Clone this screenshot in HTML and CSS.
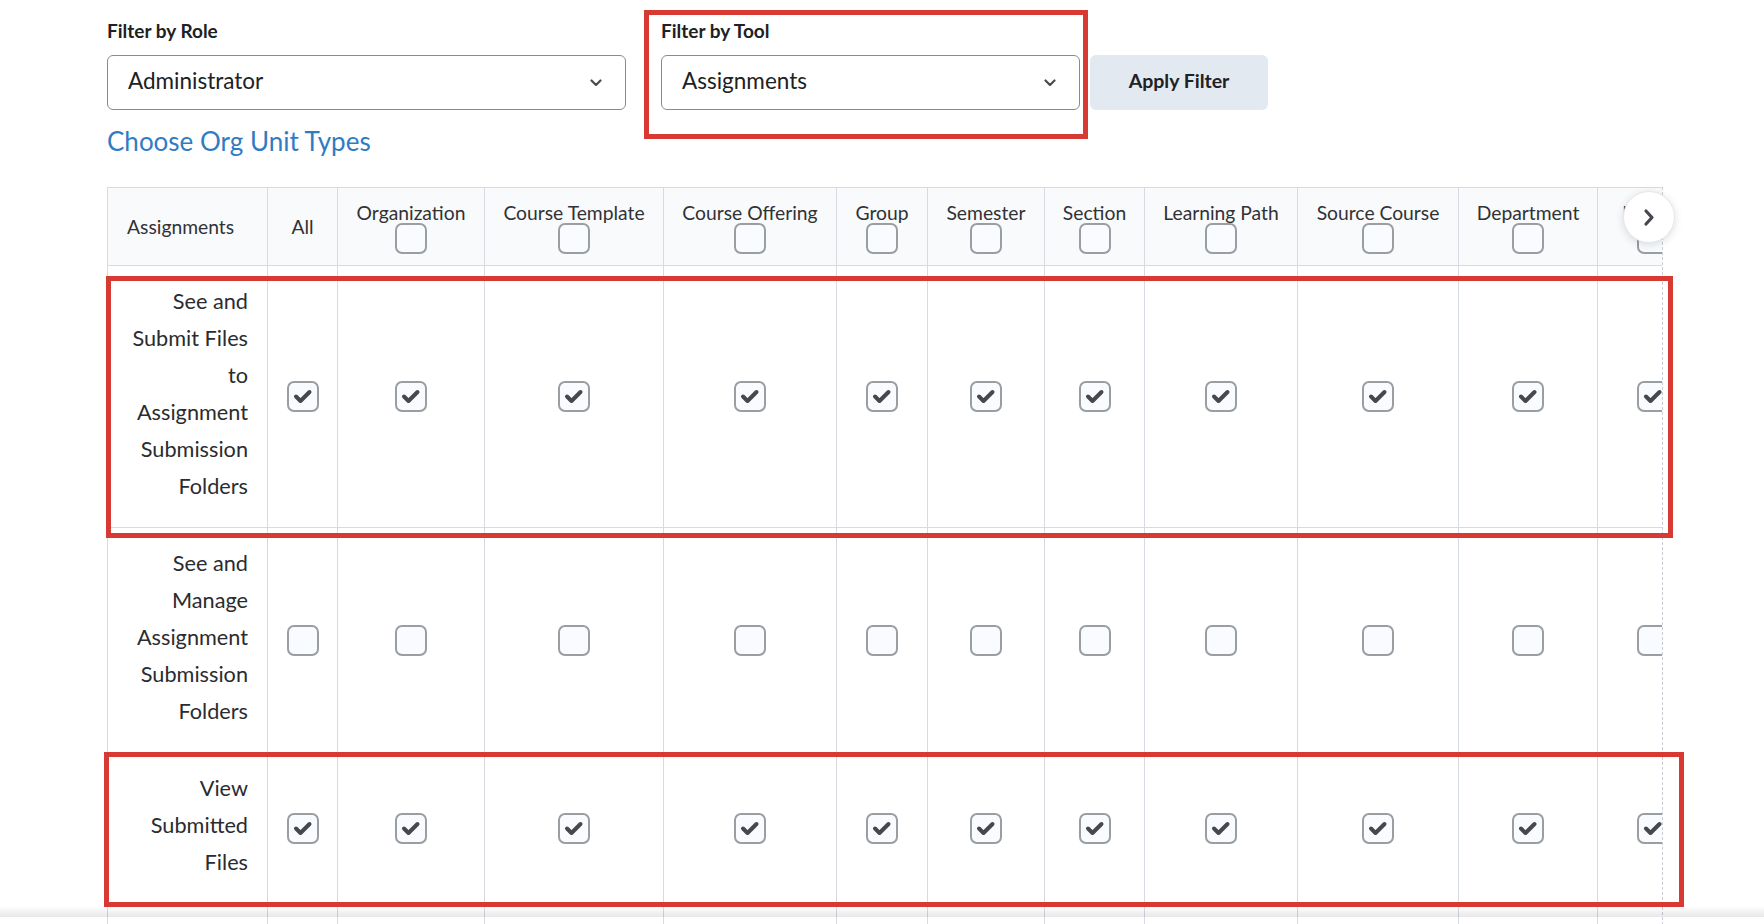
FILE: index.html
```html
<!DOCTYPE html>
<html>
<head>
	<title>Permissions</title>
	<meta charset="utf-8">
	<link rel="stylesheet" href="styles.css">
</head>
<body>
	<!-- check mark used by every ticked box -->
	<svg class="defs" width="0" height="0">
		<symbol id="ck" viewBox="0 0 28 27"><path d="M7 13.5l4.5 4.5 9-9" fill="none" stroke="currentColor" stroke-width="4" stroke-linecap="round" stroke-linejoin="round"/></symbol>
		<symbol id="down" viewBox="0 0 12 8"><path d="M1.5 1.5L6 6l4.5-4.5" fill="none" stroke="currentColor" stroke-width="2.2" stroke-linecap="round" stroke-linejoin="round"/></symbol>
	</svg>

	<div class="page">
		<!--filters start-->
		<div class="filters">
			<div class="field role">
				<label>Filter by Role</label>
				<div class="select"><span>Administrator</span><svg class="chev"><use href="#down"/></svg></div>
			</div>
			<div class="field tool">
				<label>Filter by Tool</label>
				<div class="select"><span>Assignments</span><svg class="chev"><use href="#down"/></svg></div>
			</div>
			<button class="btn">Apply Filter</button>
		</div>
		<a class="org-link" href="#">Choose Org Unit Types</a>
		<!--end filters-->

		<!--permission grid start-->
		<div class="grid-area">
			<div class="grid-scroll">
				<table class="perm">
					<colgroup>
						<col class="c-name"><col class="c-all"><col class="c-org"><col class="c-tpl"><col class="c-off"><col class="c-grp">
						<col class="c-sem"><col class="c-sec"><col class="c-lp"><col class="c-src"><col class="c-dep"><col class="c-fac">
					</colgroup>
					<thead>
						<tr>
							<th class="name">Assignments</th>
							<th>All</th>
							<th>Organization<span class="cb"></span></th>
							<th>Course Template<span class="cb"></span></th>
							<th>Course Offering<span class="cb"></span></th>
							<th>Group<span class="cb"></span></th>
							<th>Semester<span class="cb"></span></th>
							<th>Section<span class="cb"></span></th>
							<th>Learning Path<span class="cb"></span></th>
							<th>Source Course<span class="cb"></span></th>
							<th>Department<span class="cb"></span></th>
							<th>Faculty<span class="cb"></span></th>
						</tr>
					</thead>
					<tbody>
						<tr>
							<td class="name">See and Submit Files to Assignment Submission Folders</td>
							<td><span class="cb on"><svg><use href="#ck"/></svg></span></td>
							<td><span class="cb on"><svg><use href="#ck"/></svg></span></td>
							<td><span class="cb on"><svg><use href="#ck"/></svg></span></td>
							<td><span class="cb on"><svg><use href="#ck"/></svg></span></td>
							<td><span class="cb on"><svg><use href="#ck"/></svg></span></td>
							<td><span class="cb on"><svg><use href="#ck"/></svg></span></td>
							<td><span class="cb on"><svg><use href="#ck"/></svg></span></td>
							<td><span class="cb on"><svg><use href="#ck"/></svg></span></td>
							<td><span class="cb on"><svg><use href="#ck"/></svg></span></td>
							<td><span class="cb on"><svg><use href="#ck"/></svg></span></td>
							<td><span class="cb on"><svg><use href="#ck"/></svg></span></td>
						</tr>
						<tr>
							<td class="name">See and Manage Assignment Submission Folders</td>
							<td><span class="cb"></span></td>
							<td><span class="cb"></span></td>
							<td><span class="cb"></span></td>
							<td><span class="cb"></span></td>
							<td><span class="cb"></span></td>
							<td><span class="cb"></span></td>
							<td><span class="cb"></span></td>
							<td><span class="cb"></span></td>
							<td><span class="cb"></span></td>
							<td><span class="cb"></span></td>
							<td><span class="cb"></span></td>
						</tr>
						<tr>
							<td class="name">View Submitted Files</td>
							<td><span class="cb on"><svg><use href="#ck"/></svg></span></td>
							<td><span class="cb on"><svg><use href="#ck"/></svg></span></td>
							<td><span class="cb on"><svg><use href="#ck"/></svg></span></td>
							<td><span class="cb on"><svg><use href="#ck"/></svg></span></td>
							<td><span class="cb on"><svg><use href="#ck"/></svg></span></td>
							<td><span class="cb on"><svg><use href="#ck"/></svg></span></td>
							<td><span class="cb on"><svg><use href="#ck"/></svg></span></td>
							<td><span class="cb on"><svg><use href="#ck"/></svg></span></td>
							<td><span class="cb on"><svg><use href="#ck"/></svg></span></td>
							<td><span class="cb on"><svg><use href="#ck"/></svg></span></td>
							<td><span class="cb on"><svg><use href="#ck"/></svg></span></td>
						</tr>
						<tr>
							<td class="name">Manage Assignment Categories</td>
							<td><span class="cb"></span></td>
							<td><span class="cb"></span></td>
							<td><span class="cb"></span></td>
							<td><span class="cb"></span></td>
							<td><span class="cb"></span></td>
							<td><span class="cb"></span></td>
							<td><span class="cb"></span></td>
							<td><span class="cb"></span></td>
							<td><span class="cb"></span></td>
							<td><span class="cb"></span></td>
							<td><span class="cb"></span></td>
						</tr>
					</tbody>
				</table>
			</div>
			<button class="scroll-next"><svg viewBox="0 0 14 19"><path d="M4 3l6 6.5L4 16" fill="none" stroke="currentColor" stroke-width="3.2" stroke-linecap="round" stroke-linejoin="round"/></svg></button>
		</div>
		<!--end permission grid-->

		<!-- highlight frames -->
		<div class="mark mark-tool"></div>
		<div class="mark mark-row1"></div>
		<div class="mark mark-row3"></div>
	</div>

	<div class="scroll-shade"></div>
</body>
</html>
```

FILE: styles.css
```css
*{margin:0;padding:0;box-sizing:border-box;}
html,body{overflow:hidden;}
body{font-family:Lato,"Noto Sans",sans-serif;color:#202122;background:#fff;}
.defs{position:absolute;width:0;height:0;}

.page{position:relative;padding:20px 0 0 107px;}

/*filters start*/
.filters{display:flex;align-items:flex-end;}
.field label{display:block;font-size:19px;font-weight:700;line-height:22px;margin-bottom:13px;color:#202122;}
.select{display:flex;align-items:center;justify-content:space-between;height:55px;padding:0 23px 4px 20px;border:1px solid #868c8f;border-radius:6px;font-size:22.5px;color:#202122;background:#fff;}
.select .chev{width:12px;height:8px;margin-top:4px;color:#494c4e;}
.role .select{width:519px;}
.tool{margin-left:35px;}
.tool .select{width:419px;}
.btn{margin-left:10px;width:178px;height:55px;padding-bottom:4px;border:0;border-radius:6px;background:#e3e9f1;font:700 19.5px Lato,sans-serif;color:#202122;cursor:pointer;}
.org-link{display:block;width:max-content;margin-top:16px;font-size:26px;line-height:30px;color:#2f7cc3;text-decoration:none;}
/*end filters*/

/*permission grid start*/
.grid-area{position:relative;margin-top:31px;}
.grid-scroll{width:1556px;overflow:hidden;border-right:1px dashed #c9ced6;}
.perm{border-collapse:collapse;table-layout:fixed;width:1600px;font-size:19.3px;color:#303236;}
.perm .c-name{width:160px;}
.perm .c-all{width:70px;}
.perm .c-org{width:147px;}
.perm .c-tpl{width:179px;}
.perm .c-off{width:173px;}
.perm .c-grp{width:91px;}
.perm .c-sem{width:117px;}
.perm .c-sec{width:100px;}
.perm .c-lp{width:153px;}
.perm .c-src{width:161px;}
.perm .c-dep{width:139px;}
.perm .c-fac{width:110px;}
.perm th,.perm td{border:1px solid #d6dbe2;text-align:center;vertical-align:middle;}
.perm th{height:78px;padding:12px 6px 11px;background:#f9fafc;font-weight:400;line-height:26px;white-space:nowrap;}
.perm th .cb{display:block;margin:-3px auto 0;}
.perm th.name{text-align:left;padding-left:19px;}
.perm td{padding:20px 6px;line-height:20px;}
.perm td.name{text-align:right;font-size:21.7px;line-height:37px;padding:17px 19px 22px 10px;color:#2a2c2f;}

.cb{display:inline-block;width:32px;height:31px;border:2px solid #999ea3;border-radius:7px;background:#f9fbff;color:#45484c;vertical-align:middle;}
.cb svg{display:block;width:28px;height:27px;}

.scroll-next{position:absolute;left:1516px;top:4px;width:52px;height:52px;border-radius:50%;border:1px solid #e4e7eb;background:#fff;box-shadow:0 2px 8px rgba(0,0,0,.13);display:flex;align-items:center;justify-content:center;color:#45484c;cursor:pointer;}
.scroll-next svg{width:14px;height:19px;}
/*end permission grid*/

.mark{position:absolute;border:5px solid #d63a32;pointer-events:none;}
.mark-tool{left:644px;top:10px;width:444px;height:129px;}
.mark-row1{left:106px;top:276px;width:1567px;height:262px;}
.mark-row3{left:104px;top:752px;width:1580px;height:155px;}

.scroll-shade{position:fixed;left:0;right:0;bottom:7px;height:11px;background:linear-gradient(rgba(0,0,0,0),rgba(0,0,0,.09));pointer-events:none;}
```
